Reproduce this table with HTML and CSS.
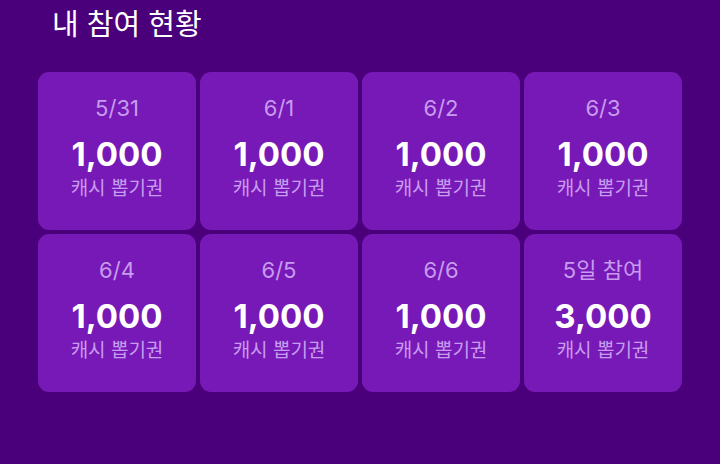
FILE: index.html
```html
<!DOCTYPE html>
<html lang="ko">
<head>
<meta charset="utf-8">
<link rel="stylesheet" href="styles.css">
</head>
<body>
<main class="page">
  <h1 class="title">내 참여 현황</h1>
  <div class="grid">
    <div class="card"><div class="date">5/31</div><div class="amount">1,000</div><div class="label">캐시 뽑기권</div></div>
    <div class="card"><div class="date">6/1</div><div class="amount">1,000</div><div class="label">캐시 뽑기권</div></div>
    <div class="card"><div class="date">6/2</div><div class="amount">1,000</div><div class="label">캐시 뽑기권</div></div>
    <div class="card"><div class="date">6/3</div><div class="amount">1,000</div><div class="label">캐시 뽑기권</div></div>
    <div class="card"><div class="date">6/4</div><div class="amount">1,000</div><div class="label">캐시 뽑기권</div></div>
    <div class="card"><div class="date">6/5</div><div class="amount">1,000</div><div class="label">캐시 뽑기권</div></div>
    <div class="card"><div class="date">6/6</div><div class="amount">1,000</div><div class="label">캐시 뽑기권</div></div>
    <div class="card"><div class="date">5일 참여</div><div class="amount">3,000</div><div class="label">캐시 뽑기권</div></div>
  </div>
</main>
</body>
</html>
```
FILE: styles.css
```css
html, body {
  margin: 0;
  padding: 0;
  background: #4a007a;
  height: 100%;
}
.page {
  font-family: Inter, "Noto Sans CJK KR", sans-serif;
  padding-top: 4px;
}
.title {
  margin: 0 0 0 52px;
  font-size: 29px;
  line-height: 36px;
  font-weight: 400;
  color: #ffffff;
  font-family: "Noto Sans CJK KR", sans-serif;
}
.grid {
  margin: 32px 0 0 38px;
  display: grid;
  grid-template-columns: repeat(4, 158px);
  grid-auto-rows: 158px;
  gap: 4px;
}
.card {
  background: #7719b6;
  border-radius: 11px;
  display: flex;
  flex-direction: column;
  align-items: center;
  padding-top: 22px;
  box-sizing: border-box;
}
.date {
  font-size: 22px;
  line-height: 28px;
  color: #c79cf0;
}
.amount {
  margin-top: 14px;
  font-size: 33px;
  line-height: 36px;
  font-weight: 700;
  color: #ffffff;
}
.label {
  margin-top: 3px;
  font-size: 19px;
  line-height: 24px;
  color: #c79cf0;
  font-family: "Noto Sans CJK KR", sans-serif;
}
```
